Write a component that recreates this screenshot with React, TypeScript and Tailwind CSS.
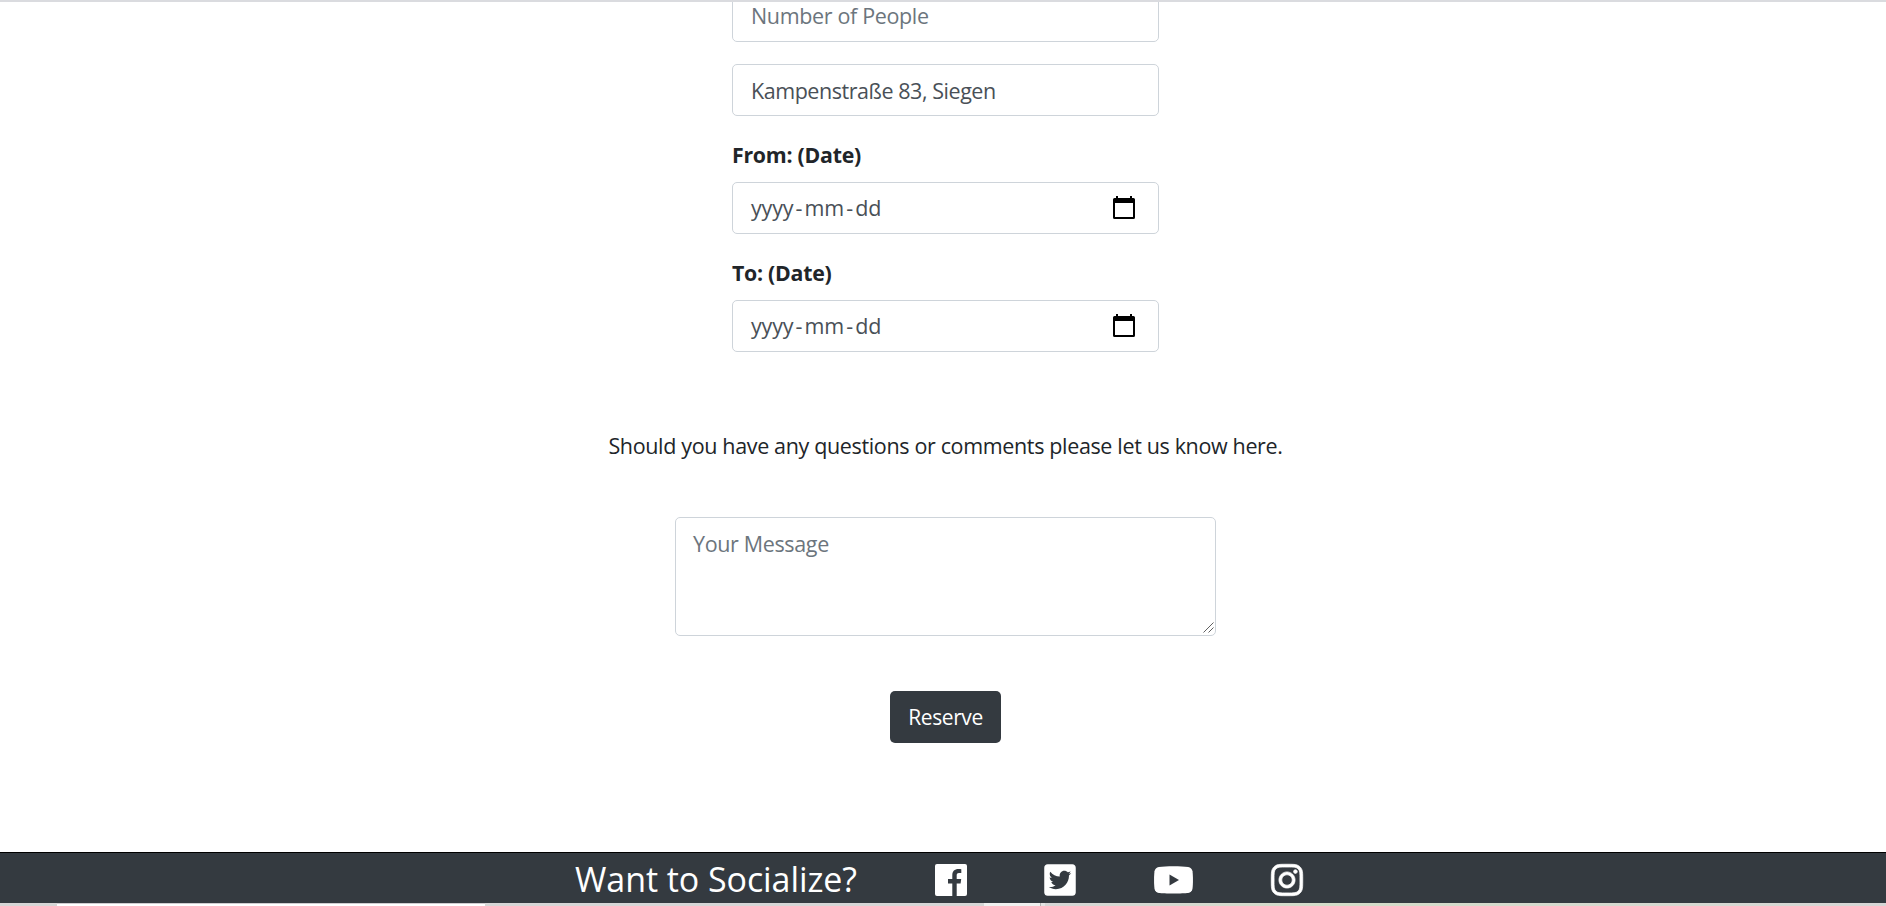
import { FaTwitterSquare, FaInstagram } from "react-icons/fa";

const field =
  "flex h-[52px] w-[427px] shrink-0 items-center rounded-[5px] border border-[#ced4da] bg-white pl-[18px] pr-[23px]";

function CalendarIcon() {
  return (
    <svg width="22" height="23" viewBox="0 0 22 23" className="-mt-px block">
      <path
        fill="#000"
        fillRule="evenodd"
        d="M3 0h2v2h12V0h2v2h1.500a1.500 1.500 0 0 1 1.500 1.500V21.500a1.500 1.500 0 0 1-1.500 1.500H1.500A1.500 1.500 0 0 1 0 21.500V3.500A1.500 1.500 0 0 1 1.500 2H3ZM2 7V21h18V7Z"
      />
    </svg>
  );
}

function FacebookIcon() {
  return (
    <svg width="32" height="32" viewBox="0 0 32 32" className="block">
      <rect width="32" height="32" rx="2" fill="#fff" />
      <path
        fill="#343a40"
        d="M17.300 32V19.500H13V15h4.300V11.300C17.300 7.100 19.700 5 23.400 5c1.200 0 2.200.1 2.900.2V9H24c-2 0-2.300 1-2.300 2.400V15H26.200l-.6 4.500h-3.900V32Z"
      />
    </svg>
  );
}

function YoutubeIcon() {
  return (
    <svg width="39" height="28" viewBox="0 0 39 28" className="block">
      <path
        fill="#fff"
        d="M19.500.3c6 0 11 .2 14.600.7 2.500.4 4 2 4.400 4.300.6 4.500.6 12.900 0 17.400-.4 2.300-1.900 3.900-4.400 4.300-4.600.6-24.600.6-29.200 0C2.400 26.600.9 25 .5 22.700c-.6-4.500-.6-12.900 0-17.400C.9 3 2.400 1.400 4.900 1 8.500.5 13.500.3 19.500.3Z"
      />
      <path fill="#343a40" d="M15.500 8.600 25 14l-9.500 5.400Z" />
    </svg>
  );
}

function DateField({ label }: { label: string }) {
  return (
    <div className="w-[427px]">
      <div className="flex h-[34px] items-center pt-[2px] text-[21.3px] font-bold tracking-[-0.25px]">{label}</div>
      <div className={field + " mt-[11px] justify-between tracking-[-0.2px] text-[#495057]"}>
        <span className="flex gap-[2.3px]">
          <span>yyyy</span>
          <span>-</span>
          <span>mm</span>
          <span>-</span>
          <span>dd</span>
        </span>
        <CalendarIcon />
      </div>
    </div>
  );
}

export default function App() {
  return (
    <div className="flex h-[906px] w-[1886px] flex-col overflow-hidden bg-white font-['Open_Sans','Noto_Sans',sans-serif] text-[21.5px] leading-[34px] tracking-[-0.35px] text-[#212529]">
      <div className="h-[2px] shrink-0 bg-[#dadbdf]" />
      <main className="flex h-[850px] shrink-0 flex-col items-center overflow-hidden pl-[5px]">
        <div className="flex h-[40px] w-[427px] shrink-0 items-end overflow-hidden">
          <div className={field + " text-[#6c757d]"}>Number of People</div>
        </div>
        <div className={field + " mt-[22px] pt-[2px] tracking-[-0.45px] text-[#495057]"}>Kampenstraße 83, Siegen</div>
        <div className="mt-[21px]">
          <DateField label="From: (Date)" />
        </div>
        <div className="mt-[21px]">
          <DateField label="To: (Date)" />
        </div>
        <p className="mt-[77px] whitespace-nowrap">Should you have any questions or comments please let us know here.</p>
        <div className="relative mt-[54px] h-[119px] w-[541px] shrink-0">
          <textarea
            placeholder="Your Message"
            className="block size-full resize-none rounded-[5px] border border-[#ced4da] px-[17px] py-[9px] placeholder:text-[#6c757d]"
          />
          <svg width="11" height="11" viewBox="0 0 11 11" className="absolute right-[2px] bottom-[3px]">
            <path d="M.5 10.500l10-10M5.500 10.500l5-5" stroke="#606060" strokeWidth="1" />
          </svg>
        </div>
        <button className="mt-[55px] h-[52px] w-[111px] shrink-0 rounded-[5px] bg-[#343a40] text-[21px] tracking-[-0.4px] text-white">
          Reserve
        </button>
      </main>
      <footer className="flex h-[51px] shrink-0 items-center border-t border-black bg-[#343a40] pl-[575px] text-white">
        <span className="w-[360px] pt-[2px] whitespace-nowrap text-[34px] tracking-[-0.07px]">Want to Socialize?</span>
        <div className="flex items-center pt-[3px]">
          <FacebookIcon />
          <FaTwitterSquare className="ml-[77px] h-[36px] w-[32px]" />
          <div className="ml-[78px]">
            <YoutubeIcon />
          </div>
          <FaInstagram className="ml-[76px] size-[36px]" stroke="#fff" strokeWidth={10} />
        </div>
      </footer>
      <div className="flex h-[3px] shrink-0">
        <div className="w-[57px] bg-[#d6d6d6]" />
        <div className="w-[428px] border-t border-[#cfcdd0] bg-white" />
        <div className="w-[499px] bg-[#d6d6d6]" />
        <div className="w-[56px] bg-[#f0f0f0]" />
        <div className="w-px bg-[#b4b4b4]" />
        <div className="w-[4px] bg-[#e4e4e4]" />
        <div className="flex-1 bg-linear-to-r from-[#d6d6d6] via-[#d3dcc8] via-35% to-[#d6d6d6]" />
      </div>
    </div>
  );
}
